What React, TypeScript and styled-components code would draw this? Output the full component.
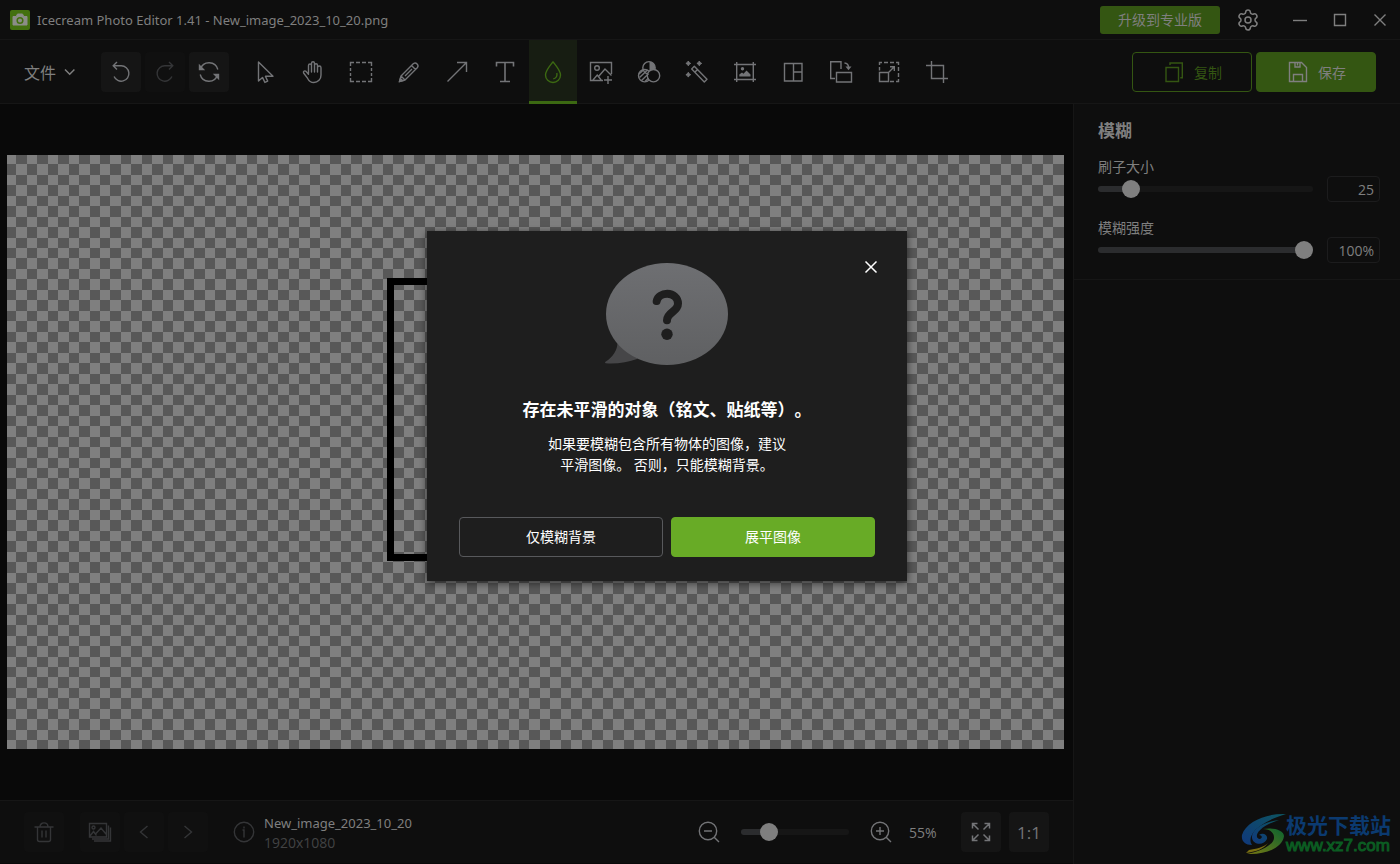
import React, { useState } from 'react';
import styled, { createGlobalStyle } from 'styled-components';
import { Settings } from 'lucide-react';

const c = {
  bar: '#0e0e0e',
  stage: '#090909',
  line: '#161616',
  button: '#151515',
  buttonOff: '#101010',
  text: '#7f7f7f',
  textDim: '#424344',
  icon: '#737477',
  iconOff: '#343537',
  green: '#345612',
  greenActive: '#3c6912',
  fill: '#2b2c2e',
};

const GlobalStyle = createGlobalStyle`
  * { box-sizing: border-box; }
  body {
    margin: 0;
    background: ${c.stage};
    color: ${c.text};
    font-family: "Open Sans", "Noto Sans CJK SC", sans-serif;
    font-size: 14px;
    text-spacing-trim: space-all;
  }
  button, input { font: inherit; color: inherit; margin: 0; }
  button { padding: 0; border: 0; background: none; cursor: pointer; }
  svg { display: block; }
`;

const Shell = styled.div`
  display: flex;
  flex-direction: column;
  min-height: 100vh;
  position: relative;
`;

const TitleBar = styled.header`
  display: flex;
  align-items: center;
  height: 40px;
  padding-left: 10px;
  background: ${c.bar};
  border-bottom: 1px solid ${c.line};
`;

const WindowTitle = styled.h1`
  flex: 1;
  margin: 0 0 0 7px;
  font-family: "Noto Sans", sans-serif;
  font-size: 13px;
  font-weight: 400;
  white-space: nowrap;
`;

const UpgradeButton = styled.button`
  width: 120px;
  height: 28px;
  margin-right: 8px;
  padding-bottom: 2px;
  border-radius: 3px;
  background: ${c.green};
`;

const WindowButton = styled.button<{ $gap?: boolean }>`
  display: grid;
  place-items: center;
  width: 40px;
  height: 39px;
  margin-right: ${(p) => (p.$gap ? '12px' : '0')};
`;

const Toolbar = styled.nav`
  display: flex;
  align-items: center;
  height: 64px;
  padding: 0 24px;
  background: ${c.bar};
  border-bottom: 1px solid ${c.line};
`;

const FileMenu = styled.button`
  display: flex;
  align-items: center;
  gap: 7px;
  margin-right: 25px;
  font-size: 16px;
`;

const Group = styled.div<{ $gap: number; $after?: number }>`
  display: flex;
  align-items: center;
  gap: ${(p) => p.$gap}px;
  margin-right: ${(p) => p.$after ?? 0}px;
`;

const SquareButton = styled.button<{ $off?: boolean }>`
  display: grid;
  place-items: center;
  width: 40px;
  height: 40px;
  border-radius: 4px;
  background: ${(p) => (p.$off ? c.buttonOff : c.button)};
  color: ${(p) => (p.$off ? c.iconOff : c.icon)};
`;

const Tools = styled.div`
  display: flex;
  flex: 1;
  height: 64px;
`;

const ToolButton = styled.button<{ $active: boolean }>`
  display: grid;
  place-items: center;
  width: 48px;
  height: 64px;
  color: ${(p) => (p.$active ? c.greenActive : c.icon)};
  background: ${(p) => (p.$active ? '#171d12' : 'transparent')};
  box-shadow: ${(p) => (p.$active ? `inset 0 -3px ${c.greenActive}` : 'none')};
`;

const ActionButton = styled.button<{ $solid?: boolean }>`
  display: flex;
  align-items: center;
  justify-content: center;
  gap: 8px;
  width: 120px;
  height: 40px;
  border: 1px solid ${c.green};
  border-radius: 4px;
  background: ${(p) => (p.$solid ? c.green : 'transparent')};
  color: ${(p) => (p.$solid ? c.text : c.green)};
`;

const Body = styled.div`
  display: flex;
  flex: 1;
`;

const Workspace = styled.main`
  display: flex;
  flex: 1;
  flex-direction: column;
  min-width: 0;
`;

const Stage = styled.div`
  display: flex;
  flex: 1;
  align-items: center;
  padding: 0 9px 0 7px;
  background: ${c.stage};
`;

const Picture = styled.svg`
  width: 100%;
  height: auto;
`;

const StatusBar = styled.footer`
  display: flex;
  align-items: center;
  height: 64px;
  padding: 0 24px;
  background: ${c.bar};
  border-top: 1px solid ${c.line};
  border-bottom: 1px solid ${c.stage};
`;

const FileInfo = styled.div`
  display: flex;
  flex: 1;
  align-items: center;
  gap: 8px;
  color: ${c.iconOff};
`;

const FileText = styled.div`
  line-height: 20px;
  color: ${c.textDim};
  padding-top: 2px;
`;

const FileName = styled.div`
  font-family: "Noto Sans", sans-serif;
  font-size: 13px;
  color: ${c.text};
`;

const PlainButton = styled.button`
  color: ${c.icon};
`;

const ZoomValue = styled.output`
  width: 52px;
`;

const RatioLabel = styled.span`
  font-size: 17px;
`;

const Range = styled.input<{ $percent: number; $width?: number }>`
  appearance: none;
  flex: ${(p) => (p.$width ? 'none' : '1')};
  width: ${(p) => (p.$width ? `${p.$width}px` : 'auto')};
  min-width: 0;
  height: 18px;
  background: transparent;

  &::-webkit-slider-runnable-track {
    height: 6px;
    border-radius: 3px;
    background: linear-gradient(
      to right,
      ${c.fill} ${(p) => p.$percent}%,
      ${c.line} ${(p) => p.$percent}%
    );
  }
  &::-webkit-slider-thumb {
    appearance: none;
    width: 18px;
    height: 18px;
    margin-top: -6px;
    border-radius: 50%;
    background: ${c.text};
  }
`;

const Side = styled.aside`
  width: 327px;
  border-left: 1px solid ${c.line};
  background: ${c.bar};
`;

const Section = styled.section`
  display: flex;
  flex-direction: column;
  gap: 17px;
  padding: 16px 20px 16px 24px;
  border-bottom: 1px solid ${c.line};
`;

const SectionTitle = styled.h2`
  margin: 0;
  font-size: 17px;
  font-weight: 700;
  line-height: 21px;
`;

const Field = styled.div`
  display: flex;
  flex-direction: column;
`;

const FieldLabel = styled.label`
  line-height: 18px;
`;

const FieldRow = styled.div`
  display: flex;
  align-items: center;
  gap: 14px;
`;

const ValueBox = styled.input`
  width: 53px;
  height: 26px;
  padding: 0 5px;
  border: 1px solid #1c1c1d;
  border-radius: 4px;
  background: transparent;
  text-align: right;
`;

const DialogLayer = styled.div`
  position: absolute;
  inset: 0;
  display: grid;
  place-items: center;
  padding: 0 66px 52px 0;
`;

const Dialog = styled.div`
  position: relative;
  display: flex;
  flex-direction: column;
  align-items: center;
  width: 480px;
  padding: 32px 32px 24px;
  background: #1e1e1e;
  box-shadow: 0 2px 8px rgba(0, 0, 0, 0.6);
  color: #ffffff;
  text-align: center;
`;

const DialogClose = styled.button`
  position: absolute;
  top: 24px;
  right: 24px;
  display: grid;
  place-items: center;
  width: 24px;
  height: 24px;
`;

const DialogTitle = styled.h2`
  margin: 32px 0 10px;
  font-size: 17px;
  font-weight: 700;
  line-height: 26px;
`;

const DialogText = styled.p`
  margin: 0 0 42px;
  line-height: 21px;
`;

const DialogActions = styled.div`
  display: flex;
  gap: 8px;
  width: 100%;
`;

const DialogButton = styled.button<{ $primary?: boolean }>`
  flex: 1;
  height: 40px;
  padding-bottom: 2px;
  border: 1px solid ${(p) => (p.$primary ? '#68ab26' : '#58595c')};
  border-radius: 4px;
  background: ${(p) => (p.$primary ? '#68ab26' : 'transparent')};
`;

const SiteMark = styled.a`
  position: absolute;
  right: 9px;
  bottom: 8px;
  display: flex;
  align-items: center;
  color: #0b3a70;
  text-decoration: none;
`;

const SiteName = styled.div`
  font-family: "Noto Sans CJK SC", sans-serif;
  font-size: 21px;
  font-weight: 700;
  line-height: 24px;
`;

const SiteUrl = styled.div`
  font-family: "Liberation Sans", sans-serif;
  font-size: 17px;
  line-height: 20px;
  color: #0b5c22;
  -webkit-text-stroke: 1px #0b5c22;
`;

function Icon({ children, width = 1.4 }: { children: React.ReactNode; width?: number }) {
  return (
    <svg
      width="24"
      height="24"
      viewBox="0 0 24 24"
      fill="none"
      stroke="currentColor"
      strokeWidth={width}
      aria-hidden="true"
    >
      {children}
    </svg>
  );
}

const tools: { name: string; art: React.ReactNode }[] = [
  {
    name: '选择',
    art: <path d="M5.5 2v19l4-3.6 2.4 5 2.8-1.3-2.3-4.8H20z" strokeLinejoin="round" />,
  },
  {
    name: '平移',
    art: (
      <path
        strokeLinecap="round"
        strokeLinejoin="round"
        d="M7.500 13.500V5.500a1.500 1.500 0 0 1 3 0V12M10.500 5.500V3.300a1.500 1.500 0 1 1 3 0V12M13.500 5.300a1.500 1.500 0 0 1 3 0V12M16.500 7.700a1.600 1.600 0 0 1 3.500 0V15a7.200 7.200 0 0 1-7.200 7.500c-3 0-4.800-1.300-6.300-4.300L2.600 13c-.8-1.800 1.300-2.800 2.600-1.400l2.300 2.700"
      />
    ),
  },
  {
    name: '选区',
    art: (
      <>
        <path d="M1.500 6V2.500H5M19 2.500h3.500V6M22.500 18v3.500H19M5 21.500H1.500V18" />
        <path d="M7 2.500h4M13 2.500h4M7 21.500h4M13 21.500h4M1.500 8v3M1.500 13v3M22.500 8v3M22.500 13v3" />
      </>
    ),
  },
  {
    name: '铅笔',
    art: (
      <>
        <path d="M2.500 21.500 4 16 16.500 3.500a2.900 2.900 0 0 1 4 4L8 20zM14.500 5.500l4 4M8 16l7-7M4 16l4 4" strokeLinejoin="round" />
        <path d="M2.500 21.500l.9-3 2.200 2.200z" fill="currentColor" />
      </>
    ),
  },
  { name: '箭头', art: <path d="M2.500 21.500l19-19M12 2.500h9.500V12" /> },
  { name: '文本', art: <path d="M3.500 6.500v-4h17v4M12 2.500v19M7 21.500h10" strokeWidth="1.600" /> },
  {
    name: '模糊',
    art: (
      <>
        <path d="M12 1.800C10 4.500 4.500 10.500 4.500 15a7.500 7.500 0 0 0 15 0C19.500 10.500 14 4.500 12 1.800z" strokeLinejoin="round" />
        <path d="M15.800 13c.6 2.700-.8 5.200-3.500 5.900" />
      </>
    ),
  },
  {
    name: '添加图像',
    art: (
      <>
        <path d="M14 20.500H1.500v-18h21V14M4 20l4.200-5 4 5M9.500 16.500 16 9l6.500 6.500M19 16v8M15 20h8" />
        <circle cx="8" cy="8" r="2.300" />
      </>
    ),
  },
  {
    name: '滤镜',
    art: (
      <>
        <circle cx="12" cy="7.800" r="6.200" />
        <circle cx="7.700" cy="15.700" r="6.200" />
        <circle cx="16.500" cy="15.700" r="6.200" fill={c.bar} />
        <path d="M12.500 1.600a6.200 6.200 0 0 1 5.200 8.500c-2-.6-3.700-.1-5.200 1.200z" fill="currentColor" stroke="none" />
        <path d="M2 14l5-4.500M2.500 17.500l7.500-7M4.500 20.500l7-6.800M8 21.500l3.500-3.500" />
      </>
    ),
  },
  {
    name: '魔棒',
    art: (
      <>
        <path
          d="M3.300 1 4.200 2.500 5.700 3.400 4.200 4.300 3.300 5.800 2.400 4.300.9 3.400 2.400 2.500zM14.300 1l.9 1.500 1.500.9-1.500.9-.9 1.500-.9-1.500-1.500-.9 1.500-.9zM3.300 12.300l.9 1.500 1.500.9-1.500.9-.9 1.500-.9-1.500-1.500-.9 1.500-.9z"
          fill="currentColor"
          strokeWidth="1"
        />
        <path d="M9.300 6.300 22 19.300l-2.700 2.700L6.700 9zM12.500 9.500l-2.700 2.700" strokeLinejoin="round" />
      </>
    ),
  },
  {
    name: '边框',
    art: (
      <>
        <path d="M1 4.500h22M1 19.500h22M3.700 2v20M20.300 2v20" />
        <path d="M6.300 16.500v-2L9 12.500l1.500 1.300 3-3.300 4 4v2z" fill="currentColor" stroke="none" />
        <circle cx="9.500" cy="8.800" r="1.700" fill="currentColor" stroke="none" />
      </>
    ),
  },
  { name: '拼贴', art: <path d="M3.500 3.500h17.500v17.500H3.500zM12.500 3.500V21M12.500 12H21" /> },
  {
    name: '旋转',
    art: (
      <>
        <path d="M6 18.500H1.700V1.700H12V9M7.500 12.500h15v9.500h-15zM15.500 3c2.500.2 4 1.700 4 4.500" />
        <path d="M16.500 6.500h6l-3 3.800z" fill="currentColor" stroke="none" />
      </>
    ),
  },
  {
    name: '调整大小',
    art: (
      <>
        <path d="M2.500 5V2.500H5M19 2.500h2.500V5M21.500 19v2.500H19M7 2.500h4M13 2.500h4M21.500 7v4M21.500 13v4M13 21.500h4M2.500 7v3.500" />
        <path d="M2.500 12.500h9v9h-9zM11.500 12.500 17 7M13 6.700h4.300V11" />
      </>
    ),
  },
  { name: '裁剪', art: <path d="M6.500 1v17.500H23M1 5.500h17.500V23" /> },
];

/* Edges of the transparency grid along one axis, snapped to whole units. */
function gridEdges(length: number) {
  const edges = [0];
  for (let n = 0; ; n += 1) {
    const edge = Math.floor(9.7 + n * 10.475);
    if (edge >= length) break;
    edges.push(edge);
  }
  return [...edges, length];
}

function darkSquares(width: number, height: number) {
  const xs = gridEdges(width);
  const ys = gridEdges(height);
  let d = '';
  for (let row = 0; row < ys.length - 1; row += 1) {
    for (let col = (row + 1) % 2; col < xs.length - 1; col += 2) {
      d += `M${xs[col]} ${ys[row]}H${xs[col + 1]}V${ys[row + 1]}H${xs[col]}z`;
    }
  }
  return d;
}

const squares = darkSquares(1057, 594);

function CanvasPicture() {
  return (
    <Picture viewBox="0 0 1057 594" shapeRendering="crispEdges" role="img" aria-label="New_image_2023_10_20">
      <rect width="1057" height="594" fill="#7f7f7f" />
      <path d={squares} fill="#585858" />
      <rect x="383.500" y="126.500" width="290" height="276" fill="none" stroke="#000000" strokeWidth="7" />
    </Picture>
  );
}

function SettingSlider({ id, label, start, text }: { id: string; label: string; start: number; text: string }) {
  const [value, setValue] = useState(start);
  return (
    <Field>
      <FieldLabel htmlFor={id}>{label}</FieldLabel>
      <FieldRow>
        <Range id={id} type="range" value={value} $percent={value} onChange={(e) => setValue(Number(e.target.value))} />
        <ValueBox aria-label={label} defaultValue={text} />
      </FieldRow>
    </Field>
  );
}

export default function App() {
  const [tool, setTool] = useState('模糊');
  const [zoom, setZoom] = useState(21);
  const [open, setOpen] = useState(true);
  const close = () => setOpen(false);

  return (
    <Shell>
      <GlobalStyle />
      <TitleBar>
        <svg width="20" height="20" viewBox="0 0 20 20" aria-hidden="true">
          <rect width="20" height="20" rx="2" fill="#43700f" />
          <path d="M3 6.500h3.200L7.500 4h5l1.300 2.500H17V15H3z" fill="#8b8d88" stroke="#8b8d88" strokeLinejoin="round" />
          <circle cx="10" cy="10.500" r="2.800" fill="#8b8d88" stroke="#43700f" strokeWidth="1.500" />
        </svg>
        <WindowTitle>Icecream Photo Editor 1.41 - New_image_2023_10_20.png</WindowTitle>
        <UpgradeButton>升级到专业版</UpgradeButton>
        <WindowButton $gap aria-label="设置">
          <Settings size={24} strokeWidth={1.5} />
        </WindowButton>
        <WindowButton aria-label="最小化">
          <Icon><path d="M5 12.500h14" /></Icon>
        </WindowButton>
        <WindowButton aria-label="最大化">
          <Icon><path d="M6.500 6.500h11v11h-11z" /></Icon>
        </WindowButton>
        <WindowButton aria-label="关闭窗口">
          <Icon><path d="M6.500 6.500l11 11M17.500 6.500l-11 11" /></Icon>
        </WindowButton>
      </TitleBar>

      <Toolbar>
        <FileMenu>
          文件
          <svg width="13" height="12" viewBox="0 0 13 12" fill="none" stroke="currentColor" strokeWidth="1.500">
            <path d="M2 3.500l4.700 4.700 4.700-4.700" />
          </svg>
        </FileMenu>
        <Group $gap={4} $after={12}>
          <SquareButton aria-label="撤消">
            <Icon><path d="M8 2 4.200 5.800 8 9.600M4.500 5.800h7.800a7.700 7.700 0 1 1-7.200 10.700" /></Icon>
          </SquareButton>
          <SquareButton $off aria-label="重做">
            <Icon><path d="M16 2l3.800 3.800L16 9.600M19.500 5.800h-7.800a7.700 7.700 0 1 0 7.200 10.700" /></Icon>
          </SquareButton>
          <SquareButton aria-label="重置">
            <Icon>
              <path d="M3.500 9a9 9 0 0 1 17.300.5M20.500 15a9 9 0 0 1-17.300-.5" />
              <path d="M2.500 5.500v4h4zM21.500 18.500v-4h-4z" fill="currentColor" />
            </Icon>
          </SquareButton>
        </Group>
        <Tools>
          {tools.map((t) => (
            <ToolButton key={t.name} $active={t.name === tool} aria-label={t.name} onClick={() => setTool(t.name)}>
              <Icon>{t.art}</Icon>
            </ToolButton>
          ))}
        </Tools>
        <Group $gap={4}>
          <ActionButton>
            <Icon><path d="M4 7.500h12.500v14H4zM8 5V3h12.300v14.700h-2" /></Icon>
            复制
          </ActionButton>
          <ActionButton $solid>
            <Icon><path d="M5 2.500h10.500l5 5V21.500h-17V2.500zM9 2.500V7h5V2.500M11.500 3v2.500M7.500 21.500v-7h9v7" /></Icon>
            保存
          </ActionButton>
        </Group>
      </Toolbar>

      <Body>
        <Workspace>
          <Stage>
            <CanvasPicture />
          </Stage>
          <StatusBar>
            <Group $gap={16} $after={24}>
              <SquareButton $off aria-label="删除">
                <Icon><path d="M2.500 7h19M8 7c0-5.500 8-5.500 8 0M5.500 7v12.500a2 2 0 0 0 2 2h9a2 2 0 0 0 2-2V7M10 10.500v7M14 10.500v7" /></Icon>
              </SquareButton>
              <Group $gap={4}>
                <SquareButton $off aria-label="图库">
                  <Icon>
                    <path d="M1.500 3.500h17v13.500h-17zM2 16l3.500-4.500 3 4M7.500 14 13 8l5 6M20.500 5.500V19H4M22.500 7.500V21H6" />
                    <circle cx="5.500" cy="7.500" r="1.500" />
                  </Icon>
                </SquareButton>
                <SquareButton $off aria-label="上一张">
                  <Icon><path d="M15.500 6l-7 6 7 6" /></Icon>
                </SquareButton>
                <SquareButton $off aria-label="下一张">
                  <Icon><path d="M8.500 6l7 6-7 6" /></Icon>
                </SquareButton>
              </Group>
            </Group>
            <FileInfo>
              <Icon>
                <circle cx="12" cy="12" r="9.700" />
                <path d="M10.500 10H12v7.500M12 6.500v2" />
              </Icon>
              <FileText>
                <FileName>New_image_2023_10_20</FileName>
                <div>1920x1080</div>
              </FileText>
            </FileInfo>
            <Group $gap={20} $after={16}>
              <PlainButton aria-label="缩小">
                <Icon>
                  <circle cx="11" cy="11" r="8.700" />
                  <path d="M17.200 17.200l4.800 4.800M7 11h8" />
                </Icon>
              </PlainButton>
              <Range
                type="range"
                aria-label="缩放"
                $width={108}
                value={zoom}
                $percent={zoom}
                onChange={(e) => setZoom(Number(e.target.value))}
              />
              <PlainButton aria-label="放大">
                <Icon>
                  <circle cx="11" cy="11" r="8.700" />
                  <path d="M17.200 17.200l4.800 4.800M7 11h8M11 7v8" />
                </Icon>
              </PlainButton>
            </Group>
            <ZoomValue>55%</ZoomValue>
            <Group $gap={8}>
              <SquareButton aria-label="适合窗口">
                <Icon width={1.5}><path d="M9.500 9.500l-6-6M14.500 9.500l6-6M9.500 14.500l-6 6M14.500 14.500l6 6M3.500 8.500v-5h5M15.500 3.500h5v5M3.500 15.500v5h5M20.500 15.500v5h-5" /></Icon>
              </SquareButton>
              <SquareButton>
                <RatioLabel>1:1</RatioLabel>
              </SquareButton>
            </Group>
          </StatusBar>
        </Workspace>

        <Side>
          <Section>
            <SectionTitle>模糊</SectionTitle>
            <SettingSlider id="brush" label="刷子大小" start={12} text="25" />
            <SettingSlider id="strength" label="模糊强度" start={100} text="100%" />
          </Section>
        </Side>
      </Body>

      {open && (
        <DialogLayer>
          <Dialog role="dialog" aria-modal="true" aria-labelledby="dialog-title">
            <DialogClose aria-label="关闭" onClick={close}>
              <Icon width={1.5}><path d="M6.500 6.500l11 11M17.500 6.500l-11 11" /></Icon>
            </DialogClose>
            <svg width="122" height="102" viewBox="0 0 122 102" overflow="visible" aria-hidden="true">
              <defs>
                <linearGradient id="bubble" x1="0" y1="0" x2="0" y2="1">
                  <stop offset="0" stopColor="#6e6f72" />
                  <stop offset="1" stopColor="#5f6062" />
                </linearGradient>
              </defs>
              <path d="M11.300 80c.5 6-4 14-11.500 18.500-1 .7-1 1.700 0 1.800 11 .7 22-.8 32-4.500z" fill="#464648" />
              <ellipse cx="61" cy="51" rx="61" ry="51" fill="url(#bubble)" />
              <path
                d="M50.700 38c1-4.500 5.300-7.200 10.500-7.200 6.300 0 10.800 4.200 10.800 9.700 0 8.500-11 8.500-11 16.800"
                fill="none"
                stroke="#1e1e1e"
                strokeWidth="8"
                strokeLinecap="round"
              />
              <circle cx="61" cy="71.300" r="5.700" fill="#1e1e1e" />
            </svg>
            <DialogTitle id="dialog-title">存在未平滑的对象（铭文、贴纸等）。</DialogTitle>
            <DialogText>
              如果要模糊包含所有物体的图像，建议
              <br />
              平滑图像。 否则，只能模糊背景。
            </DialogText>
            <DialogActions>
              <DialogButton onClick={close}>仅模糊背景</DialogButton>
              <DialogButton $primary onClick={close}>展平图像</DialogButton>
            </DialogActions>
          </Dialog>
        </DialogLayer>
      )}

      <SiteMark href="#">
        <svg width="45" height="44" viewBox="0 0 45 44" aria-hidden="true">
          <defs>
            <linearGradient id="markBlue" x1="1" y1="0" x2="0" y2="1">
              <stop offset="0" stopColor="#0d5560" />
              <stop offset="1" stopColor="#10387c" />
            </linearGradient>
            <linearGradient id="markGreen" x1="1" y1="0" x2="0" y2="1">
              <stop offset="0" stopColor="#0b6330" />
              <stop offset="1" stopColor="#7a7a12" />
            </linearGradient>
          </defs>
          <path d="M45 2C27 1 5 9 1 23c-1 6 3 10 10 10C6 26 12 12 45 2z" fill="url(#markBlue)" />
          <path d="M38 8C22 10 10 18 11 26c1 7 12 8 15 1 1-4-4-7-8-4 3 0 4 3 1 4-7-1-3-12 19-19z" fill="url(#markBlue)" />
          <path d="M22 17c10-2 21 1 21 7-1 10-15 19-37 18 15-3 28-10 27-17 0-5-5-8-11-8z" fill="url(#markGreen)" />
          <path d="M27 31c-4 4-12 6-19 7l-3 3c9-1 18-4 22-10z" fill="#7a6f12" />
        </svg>
        <div>
          <SiteName>极光下载站</SiteName>
          <SiteUrl>www.xz7.com</SiteUrl>
        </div>
      </SiteMark>
    </Shell>
  );
}
